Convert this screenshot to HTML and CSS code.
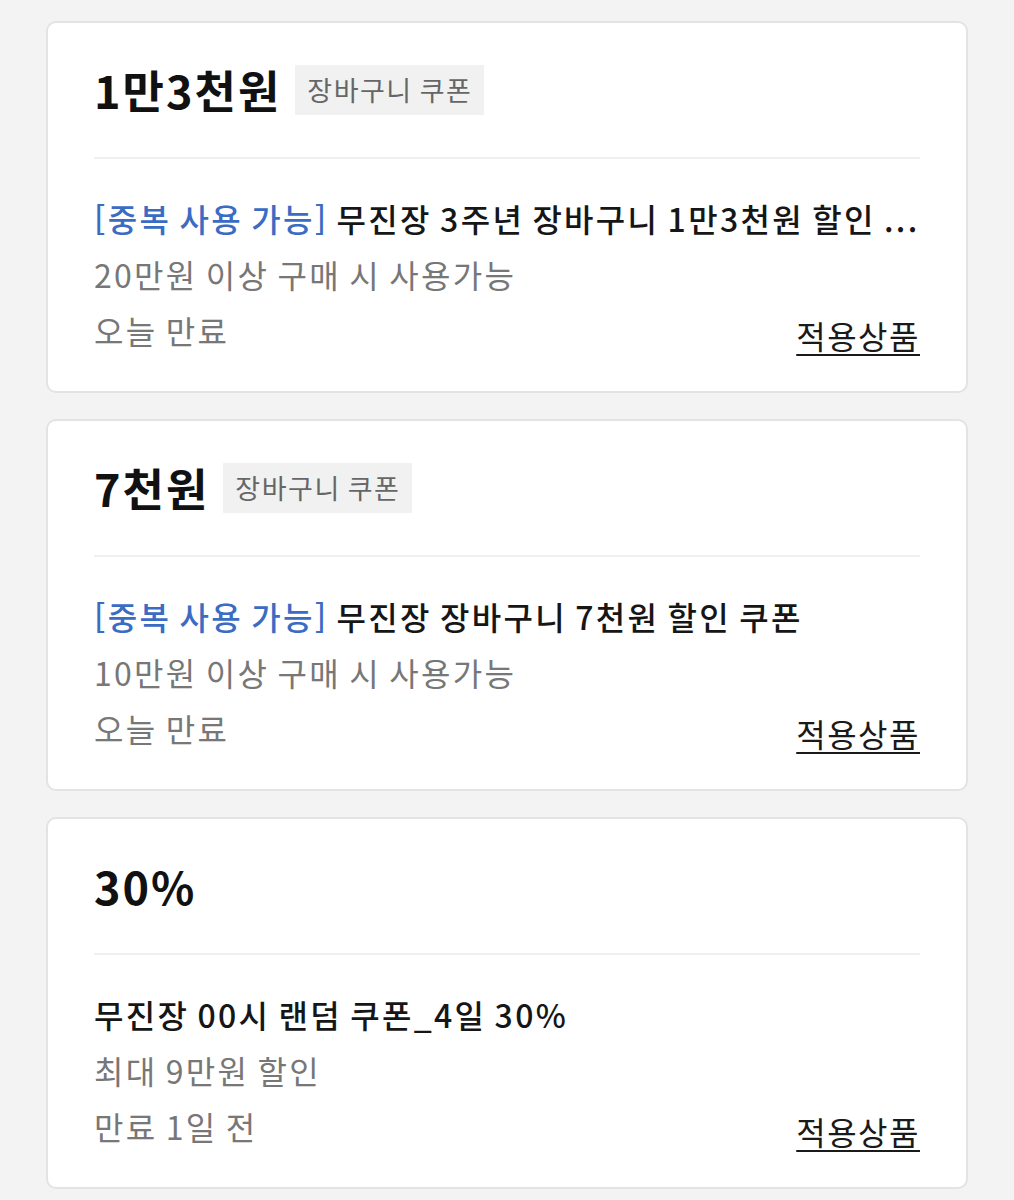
FILE: index.html
```html
<!DOCTYPE html>
<html lang="ko">
<head>
<meta charset="utf-8">
<title>쿠폰</title>
<link rel="stylesheet" href="styles.css">
</head>
<body>
<main class="list">
  <section class="card">
    <div class="head">
      <h2 class="amount">1만3천원</h2>
      <span class="tag">장바구니 쿠폰</span>
    </div>
    <div class="divider"></div>
    <p class="name"><span class="dup">[중복 사용 가능]</span> 무진장 3주년 장바구니 1만3천원 할인 ...</p>
    <p class="cond">20만원 이상 구매 시 사용가능</p>
    <div class="meta">
      <span class="expire">오늘 만료</span>
      <a class="apply" href="#">적용상품</a>
    </div>
  </section>
  <section class="card">
    <div class="head">
      <h2 class="amount">7천원</h2>
      <span class="tag">장바구니 쿠폰</span>
    </div>
    <div class="divider"></div>
    <p class="name"><span class="dup">[중복 사용 가능]</span> 무진장 장바구니 7천원 할인 쿠폰</p>
    <p class="cond">10만원 이상 구매 시 사용가능</p>
    <div class="meta">
      <span class="expire">오늘 만료</span>
      <a class="apply" href="#">적용상품</a>
    </div>
  </section>
  <section class="card">
    <div class="head">
      <h2 class="amount">30%</h2>
    </div>
    <div class="divider"></div>
    <p class="name">무진장 00시 랜덤 쿠폰_4일 30%</p>
    <p class="cond">최대 9만원 할인</p>
    <div class="meta">
      <span class="expire">만료 1일 전</span>
      <a class="apply" href="#">적용상품</a>
    </div>
  </section>
</main>
</body>
</html>
```
FILE: styles.css
```css
html, body {
  margin: 0;
  padding: 0;
  background: #f3f3f3;
}
body {
  font-family: "Noto Sans CJK KR", "Noto Sans", sans-serif;
  color: #111;
}
.list {
  display: flex;
  flex-direction: column;
  gap: 26px;
  padding: 21px 46px 0;
}
.card {
  background: #fff;
  border: 2px solid #e3e3e3;
  border-radius: 10px;
  padding: 42px 46px 33px;
}
.head {
  display: flex;
  align-items: center;
  gap: 14px;
  min-height: 50px;
}
.amount {
  margin: 0;
  font-size: 45px;
  font-weight: 700;
  line-height: 50px;
  color: #111;
  letter-spacing: 2px;
}
.tag {
  background: #f1f1f1;
  color: #666;
  font-size: 27px;
  line-height: 50px;
  padding: 0 12px;
  letter-spacing: 1.5px;
  word-spacing: -2px;
}
.divider {
  height: 2px;
  background: #efefef;
  margin: 42px 0 31px;
}
.name, .cond, .expire {
  margin: 0;
  font-size: 32px;
  line-height: 56px;
  letter-spacing: 2.3px;
  word-spacing: -3px;
}
.name {
  font-weight: 500;
  color: #161616;
  white-space: nowrap;
}
.dup {
  color: #3b6cc4;
}
.cond, .expire {
  color: #777;
}
.meta {
  display: flex;
  justify-content: space-between;
  align-items: flex-end;
}
.apply {
  font-size: 32px;
  line-height: 46px;
  color: #1a1a1a;
  letter-spacing: 1.5px;
  text-decoration: underline;
  text-decoration-thickness: 2px;
  text-underline-offset: 5px;
}
```
